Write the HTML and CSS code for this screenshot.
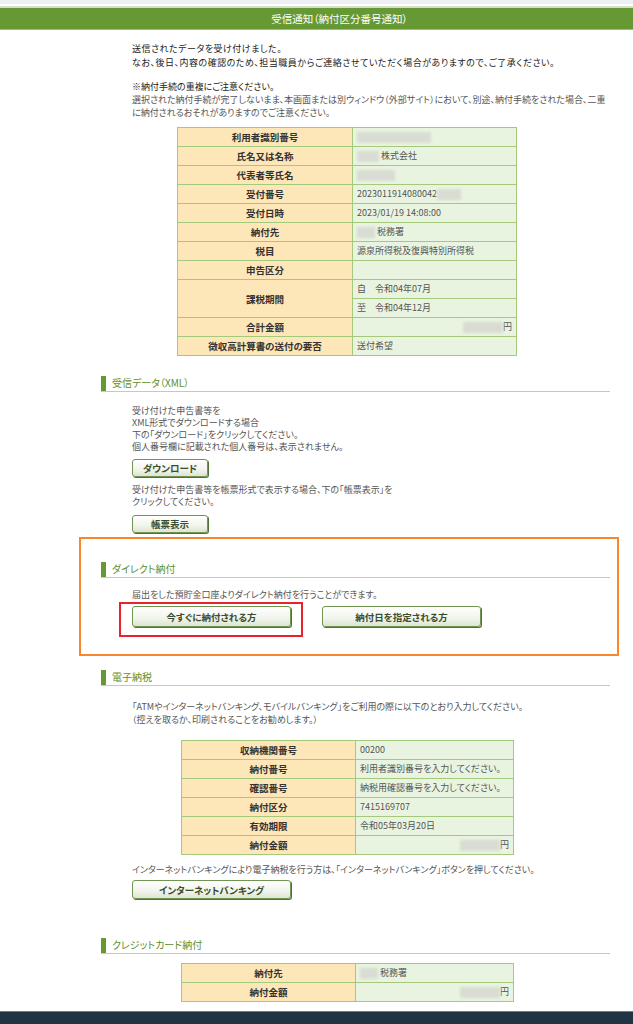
FILE: index.html
```html
<!DOCTYPE html>
<html lang="ja">
<head>
    <meta charset="UTF-8">
    <title>受信通知（納付区分番号通知）</title>
    <link rel="stylesheet" href="styles.css">
</head>
<body>
    <div class="top-strip"></div>
    <header class="title-bar">受信通知（納付区分番号通知）</header>

    <main class="page">
        <div class="intro">
            <p class="lead">送信されたデータを受け付けました。<br>なお、後日、内容の確認のため、担当職員からご連絡させていただく場合がありますので、ご了承ください。</p>
            <p class="notice"><span class="notice-head">※納付手続の重複にご注意ください。</span><br>選択された納付手続が完了しないまま、本画面または別ウィンドウ（外部サイト）において、別途、納付手続をされた場合、二重<br>に納付されるおそれがありますのでご注意ください。</p>
        </div>

        <table class="info info-main">
            <tr><th>利用者識別番号</th><td><span class="blur" style="width:74px"></span></td></tr>
            <tr><th>氏名又は名称</th><td><span class="blur" style="width:22px"></span> 株式会社</td></tr>
            <tr><th>代表者等氏名</th><td><span class="blur" style="width:38px"></span></td></tr>
            <tr><th>受付番号</th><td>2023011914080042<span class="blur" style="width:24px"></span></td></tr>
            <tr><th>受付日時</th><td>2023/01/19 14:08:00</td></tr>
            <tr><th>納付先</th><td><span class="blur" style="width:18px"></span> 税務署</td></tr>
            <tr><th>税目</th><td>源泉所得税及復興特別所得税</td></tr>
            <tr><th>申告区分</th><td></td></tr>
            <tr><th rowspan="2">課税期間</th><td>自　令和04年07月</td></tr>
            <tr><td>至　令和04年12月</td></tr>
            <tr><th>合計金額</th><td class="amount"><span class="blur" style="width:40px"></span>円</td></tr>
            <tr><th>徴収高計算書の送付の要否</th><td>送付希望</td></tr>
        </table>

        <section class="sec sec-xml">
            <h2 class="sec-title">受信データ（XML）</h2>
            <div class="sec-body">
                <p class="desc">受け付けた申告書等を<br>XML形式でダウンロードする場合<br>下の「ダウンロード」をクリックしてください。<br>個人番号欄に記載された個人番号は、表示されません。</p>
                <button class="btn btn-small">ダウンロード</button>
                <p class="desc desc-after">受け付けた申告書等を帳票形式で表示する場合、下の「帳票表示」を<br>クリックしてください。</p>
                <button class="btn btn-small">帳票表示</button>
            </div>
        </section>

        <section class="sec direct">
            <h2 class="sec-title">ダイレクト納付</h2>
            <div class="sec-body">
                <p class="desc">届出をした預貯金口座よりダイレクト納付を行うことができます。</p>
                <div class="direct-buttons">
                    <span class="mark"><button class="btn btn-wide">今すぐに納付される方</button></span>
                    <button class="btn btn-wide">納付日を指定される方</button>
                </div>
            </div>
        </section>

        <section class="sec sec-etax">
            <h2 class="sec-title">電子納税</h2>
            <div class="sec-body">
                <p class="desc">「ATMやインターネットバンキング、モバイルバンキング」をご利用の際に以下のとおり入力してください。<br>（控えを取るか、印刷されることをお勧めします。）</p>
            </div>
            <table class="info info-sub">
                <tr><th>収納機関番号</th><td>00200</td></tr>
                <tr><th>納付番号</th><td>利用者識別番号を入力してください。</td></tr>
                <tr><th>確認番号</th><td>納税用確認番号を入力してください。</td></tr>
                <tr><th>納付区分</th><td>7415169707</td></tr>
                <tr><th>有効期限</th><td>令和05年03月20日</td></tr>
                <tr><th>納付金額</th><td class="amount"><span class="blur" style="width:40px"></span>円</td></tr>
            </table>
            <div class="sec-body">
                <p class="desc desc-bank">インターネットバンキングにより電子納税を行う方は、「インターネットバンキング」ボタンを押してください。</p>
                <button class="btn btn-wide">インターネットバンキング</button>
            </div>
        </section>

        <section class="sec sec-card">
            <h2 class="sec-title">クレジットカード納付</h2>
            <table class="info info-sub">
                <tr><th>納付先</th><td><span class="blur" style="width:18px"></span> 税務署</td></tr>
                <tr><th>納付金額</th><td class="amount"><span class="blur" style="width:40px"></span>円</td></tr>
            </table>
        </section>
    </main>

    <footer class="bottom-bar"></footer>
</body>
</html>
```

FILE: styles.css
```css
body {
    margin: 0;
    font-family: "Noto Sans CJK JP", "Noto Sans", sans-serif;
    font-size: 9px;
    font-feature-settings: "palt";
    color: #333;
    background: #fff;
}

p {
    margin: 0;
}

.top-strip {
    height: 4px;
    background: #eff0f3;
}

.title-bar {
    margin-top: 2px;
    border-top: 2px solid #d3dfc8;
    border-bottom: 1px solid #9dbd78;
    background: #669933;
    color: #fff;
    height: 21px;
    line-height: 21px;
    font-size: 10.5px;
    text-align: center;
    padding-left: 46px;
}

.page {
    margin-left: 101px;
    width: 509px;
}

.intro {
    padding-left: 31px;
    margin-top: 12px;
}

.lead {
    line-height: 14px;
    letter-spacing: 0.5px;
    color: #222;
}

.notice {
    margin-top: 10px;
    line-height: 13px;
    color: #555;
}

.notice-head {
    color: #222;
}

/* 一覧表 */
.info {
    border-collapse: collapse;
    border: 1px solid #a5c97c;
}

.info th,
.info td {
    border: 1px solid #a5c97c;
    height: 18px;
    padding: 0 4px;
    line-height: 18px;
}

.info th {
    background: #fde6b7;
    color: #333;
    font-weight: bold;
    font-size: 9.5px;
    text-align: center;
}

.info td {
    background: #e9f4e0;
    color: #555;
    text-align: left;
}

.info td.amount {
    text-align: right;
}

.info-main {
    margin: 8px 0 0 76px;
    width: 340px;
}

.info-main th {
    width: 166px;
}

.info-sub {
    margin: 14px 0 0 80px;
    width: 333px;
}

.info-sub th {
    width: 165px;
}

.blur {
    display: inline-block;
    height: 11px;
    vertical-align: middle;
    background: #d8dcd3;
    filter: blur(1.5px);
}

/* セクション */
.sec {
    margin-top: 19px;
}

.sec-title {
    display: flex;
    align-items: center;
    margin: 0;
    font-size: 10px;
    font-weight: normal;
    color: #5d8f2d;
    line-height: 16px;
    border-bottom: 1px solid #b9d59c;
}

.sec-title::before {
    content: "";
    width: 5px;
    height: 15px;
    margin-right: 6px;
    background: #669933;
}

.sec-body {
    padding-left: 31px;
}

.desc {
    margin-top: 13px;
    line-height: 12px;
    color: #555;
}

.btn {
    display: block;
    margin-top: 6px;
    height: 18px;
    padding: 0;
    font-family: inherit;
    font-feature-settings: "palt";
    font-size: 9.5px;
    font-weight: bold;
    color: #3c4d2c;
    background: linear-gradient(#ffffff, #f1f4ec 60%, #dde5d2);
    border: 1px solid #6f9550;
    border-radius: 3px;
    box-shadow: 1px 1px 0 #51713a;
}

.btn-small {
    width: 76px;
}

.btn-wide {
    width: 159px;
}

.desc-after {
    margin-top: 7px;
}

.desc-after + .btn {
    margin-top: 7px;
}

/* ダイレクト納付 */
.direct {
    margin: 4px -9px 0 -22px;
    padding: 22px 7px 17px 20px;
    border: 2px solid #f7862d;
}

.direct .desc {
    margin-top: 11px;
}

.direct-buttons {
    display: flex;
    align-items: flex-start;
    gap: 19px;
    margin-left: -13px;
    margin-top: 1px;
}

.mark {
    display: block;
    padding: 2px 10px 8px 11px;
    border: 2px solid #e8232b;
}

.direct-buttons .btn {
    margin-top: 4px;
    height: 21px;
}

.mark .btn {
    margin-top: 0;
}

.sec-etax {
    margin-top: 13px;
}

.sec-etax .desc {
    margin-top: 14px;
    line-height: 13px;
}

.sec-etax .desc-bank {
    margin-top: 9px;
    line-height: 12px;
}

.sec-etax .btn {
    margin-top: 4px;
    height: 19px;
}

.sec-card {
    margin-top: 38px;
}

.sec-card .info-sub {
    margin-top: 9px;
}

.bottom-bar {
    margin-top: 9px;
    height: 40px;
    background: #203441;
    border-top: 1px solid #6d7c86;
}
```
